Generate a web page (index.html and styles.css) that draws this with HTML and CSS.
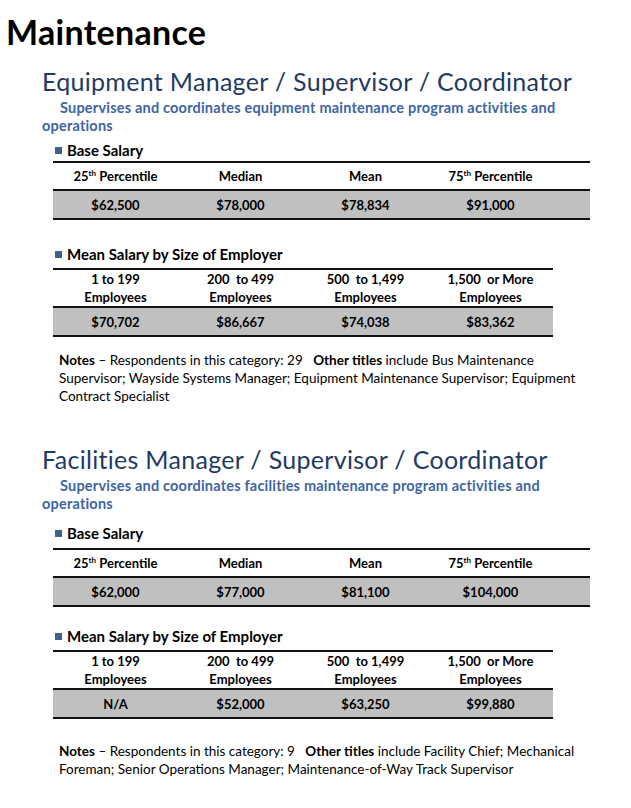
FILE: index.html
```html
<!DOCTYPE html>
<html lang="en">
<head>
<meta charset="utf-8">
<title>Maintenance</title>
<link rel="stylesheet" href="styles.css">
</head>
<body>
<h1 class="page-title">Maintenance</h1>

<section class="job job-first">
  <h2 class="job-title">Equipment Manager / Supervisor / Coordinator</h2>
  <p class="job-desc">Supervises and coordinates equipment maintenance program activities and operations</p>

  <h3 class="sub-heading">Base Salary</h3>
  <table class="salary salary-base">
    <thead>
      <tr><th>25<sup>th</sup> Percentile</th><th>Median</th><th>Mean</th><th>75<sup>th</sup> Percentile</th><th class="spacer"></th></tr>
    </thead>
    <tbody>
      <tr><td>$62,500</td><td>$78,000</td><td>$78,834</td><td>$91,000</td><td class="spacer"></td></tr>
    </tbody>
  </table>

  <h3 class="sub-heading sub-heading-size">Mean Salary by Size of Employer</h3>
  <table class="salary salary-size">
    <thead>
      <tr><th>1 to 199<br>Employees</th><th>200&nbsp; to 499<br>Employees</th><th>500&nbsp; to 1,499<br>Employees</th><th>1,500&nbsp; or More<br>Employees</th></tr>
    </thead>
    <tbody>
      <tr><td>$70,702</td><td>$86,667</td><td>$74,038</td><td>$83,362</td></tr>
    </tbody>
  </table>

  <p class="notes"><b>Notes</b> – Respondents in this category: 29 &nbsp; <b>Other titles</b> include Bus Maintenance Supervisor; Wayside Systems Manager; Equipment Maintenance Supervisor; Equipment Contract Specialist</p>
</section>

<section class="job job-second">
  <h2 class="job-title">Facilities Manager / Supervisor / Coordinator</h2>
  <p class="job-desc">Supervises and coordinates facilities maintenance program activities and operations</p>

  <h3 class="sub-heading sub-heading-spaced">Base Salary</h3>
  <table class="salary salary-base salary-loose">
    <thead>
      <tr><th>25<sup>th</sup> Percentile</th><th>Median</th><th>Mean</th><th>75<sup>th</sup> Percentile</th><th class="spacer"></th></tr>
    </thead>
    <tbody>
      <tr><td>$62,000</td><td>$77,000</td><td>$81,100</td><td>$104,000</td><td class="spacer"></td></tr>
    </tbody>
  </table>

  <h3 class="sub-heading sub-heading-size2">Mean Salary by Size of Employer</h3>
  <table class="salary salary-size salary-loose2">
    <thead>
      <tr><th>1 to 199<br>Employees</th><th>200&nbsp; to 499<br>Employees</th><th>500&nbsp; to 1,499<br>Employees</th><th>1,500&nbsp; or More<br>Employees</th></tr>
    </thead>
    <tbody>
      <tr><td>N/A</td><td>$52,000</td><td>$63,250</td><td>$99,880</td></tr>
    </tbody>
  </table>

  <p class="notes notes-spaced"><b>Notes</b> – Respondents in this category: 9 &nbsp; <b>Other titles</b> include Facility Chief; Mechanical Foreman; Senior Operations Manager; Maintenance-of-Way Track Supervisor</p>
</section>
</body>
</html>
```

FILE: styles.css
```css
html, body {
  margin: 0;
  padding: 0;
  background: #ffffff;
}

body {
  font-family: Lato, "Open Sans", "Liberation Sans", sans-serif;
  color: #000000;
}

.page-title {
  margin: 0;
  padding: 12px 0 0 6px;
  font-size: 34px;
  line-height: 40px;
  font-weight: 700;
  letter-spacing: 0.3px;
}

.job {
  padding-left: 42px;
}

.job-first {
  padding-top: 14px;
}

.job-second {
  padding-top: 39px;
}

.job-title {
  margin: 0;
  font-size: 25px;
  line-height: 30px;
  font-weight: 400;
  color: #1f3b63;
  letter-spacing: 0.3px;
}

.job-desc {
  margin: 3px 0 0 0;
  width: 530px;
  font-size: 14.5px;
  line-height: 18px;
  font-weight: 700;
  color: #3d65a2;
  text-indent: 18px;
  letter-spacing: 0.2px;
}

.sub-heading {
  display: flex;
  align-items: center;
  gap: 5px;
  margin: 6px 0 0 13px;
  font-size: 15px;
  line-height: 18px;
  font-weight: 700;
}

.sub-heading::before {
  content: "";
  width: 7px;
  height: 7px;
  background: #3f5f90;
}

.sub-heading-size {
  margin-top: 25px;
}

.sub-heading-spaced {
  margin-top: 11px;
}

.sub-heading-size2 {
  margin-top: 20px;
}

.salary {
  margin: 2px 0 0 11px;
  border-collapse: collapse;
  table-layout: fixed;
}

.salary-size {
  margin-top: 5px;
}

.salary-loose {
  margin-top: 6px;
}

.salary-loose2 {
  margin-top: 5px;
}

.salary-base {
  width: 537px;
}

.salary-size {
  width: 500px;
}

.salary th,
.salary td {
  width: 125px;
  padding: 0;
  text-align: center;
  font-size: 13px;
  font-weight: 700;
}

.salary th.spacer,
.salary td.spacer {
  width: auto;
}

.salary thead tr {
  border-top: 2px solid #111111;
  border-bottom: 2px solid #111111;
}

.salary tbody tr {
  border-bottom: 2px solid #111111;
  background: #c0c0c0;
}

.salary-base th {
  height: 26px;
  line-height: 18px;
}

.salary-size th {
  height: 35px;
  line-height: 18px;
}

.salary td {
  height: 27px;
  line-height: 18px;
}

.salary sup {
  font-size: 8px;
  line-height: 0;
  vertical-align: 5px;
}

.notes {
  margin: 14px 0 0 17px;
  width: 535px;
  font-size: 13.5px;
  line-height: 18px;
}

.notes-spaced {
  margin-top: 23px;
}
```
